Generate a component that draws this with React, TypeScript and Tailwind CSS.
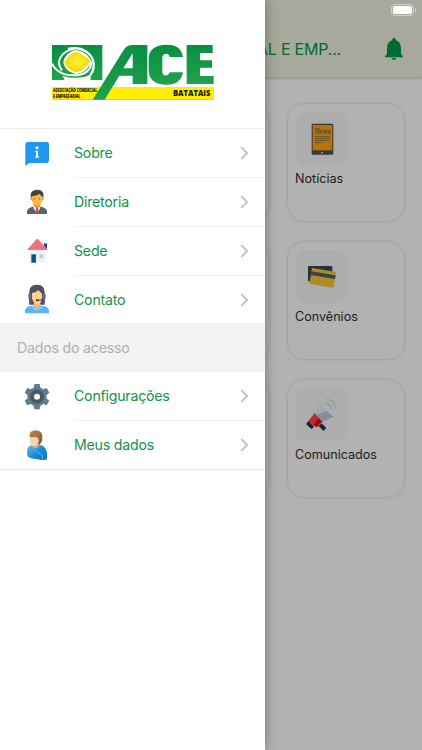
import React from "react";

type Children = { children: React.ReactNode };

function Logo() {
  return (
    <svg className="h-[75px] w-[185px]" viewBox="0 0 555 225">
      <defs>
        <linearGradient id="leaf" x1="0" y1="0" x2="0" y2="1">
          <stop offset="0" stopColor="#078f43" />
          <stop offset="1" stopColor="#21a14b" />
        </linearGradient>
        <radialGradient id="sun">
          <stop offset="0" stopColor="#ffef3c" />
          <stop offset="1" stopColor="#f2dc00" />
        </radialGradient>
      </defs>
      <rect x="36" y="156" width="486" height="38" fill="#ffee04" />
      <path d="M36 192H522V195H36Z" fill="#d9cf55" />
      <rect x="36" y="30" width="151" height="105" fill="url(#leaf)" />
      <path d="M68 122C84 130 132 132 153 118L151 136H74Z" fill="#fff" />
      <path d="M66 106C46 80 62 48 104 41" fill="none" stroke="#fff" strokeWidth="6" />
      <path d="M84 42C126 32 160 56 161 88C161 102 158 112 151 120" fill="none" stroke="#fff" strokeWidth="7" />
      <path d="M36 86C48 110 72 122 104 121C136 120 154 104 154 80" fill="none" stroke="#fff" strokeWidth="6" />
      <path d="M70 82C72 64 88 48 108 45C130 47 148 63 154 79C147 100 131 115 109 117C88 114 73 102 70 82Z" fill="#fff" />
      <path d="M73 82C80 69 93 55 106 51C122 54 143 67 150 79C142 94 126 110 109 112C93 109 78 98 73 82Z" fill="url(#sun)" />
      <path d="M158 194L251 45Q260 30 278 30H322V147H278V122H238L194 194Z" fill="url(#leaf)" />
      <path d="M250 100L278 55V100Z" fill="#fff" />
      <path d="M429 66H389C387 53 367 53 367 68V110C367 125 387 125 389 112H429C425 137 409 149 381 149C343 149 326 133 326 105V74C326 45 343 29 381 29C410 29 425 41 429 66Z" fill="url(#leaf)" />
      <path d="M440 30H518V54H480V76H516V98H480V123H521V147H440Z" fill="url(#leaf)" />
      <g fontFamily="'Open Sans', sans-serif" fontWeight="800" fill="#222209">
        <text x="39" y="171" fontSize="13.5" textLength="133" lengthAdjust="spacingAndGlyphs">ASSOCIAÇÃO COMERCIAL</text>
        <text x="39" y="189" fontSize="13.5" textLength="82" lengthAdjust="spacingAndGlyphs">E EMPRESARIAL</text>
        <text x="399" y="184" fontSize="25" textLength="112" lengthAdjust="spacingAndGlyphs">BATATAIS</text>
      </g>
    </svg>
  );
}

const menuIcon = "h-8 w-7 shrink-0";

function InfoIcon() {
  return (
    <svg className={menuIcon} viewBox="69 36 84 96">
      <path d="M84 51H139Q147 51 147 59V106Q147 114 139 114H87L76 124V59Q76 51 84 51Z" fill="#2196f3" />
      <circle cx="111" cy="68" r="4.5" fill="#fff" />
      <path d="M106 77H114V94H117V98H106V94H108V81H106Z" fill="#fff" />
    </svg>
  );
}

function ManagerIcon() {
  return (
    <svg className={menuIcon} viewBox="69 183 84 96">
      <path d="M81 267V259Q82 250 96 246L111 243L126 246Q140 250 141 259V267Z" fill="#546472" />
      <path d="M100 243H121L120 250L111 265L101 250Z" fill="#fff" />
      <path d="M101 236H121V243L111 251L101 243Z" fill="#f28c08" />
      <path d="M108 249H114L116 267H106Z" fill="#d34b4b" />
      <path d="M95 211Q110 202 127 211V224Q124 242 111 243Q98 242 95 224Z" fill="#ffb44d" />
      <circle cx="94" cy="222" r="4" fill="#ffa726" />
      <circle cx="128" cy="222" r="4" fill="#ffa726" />
      <path d="M93 220Q87 195 111 194Q136 194 129 220L126 214L118 207Q109 213 97 213Z" fill="#424242" />
      <circle cx="103" cy="222" r="1.8" fill="#68401f" />
      <circle cx="119" cy="222" r="1.8" fill="#68401f" />
    </svg>
  );
}

function HouseIcon() {
  return (
    <svg className={menuIcon} viewBox="69 30 84 96">
      <path d="M132 55H141V74H132Z" fill="#174a80" />
      <path d="M87 73H137V113H87Z" fill="#edf2f7" />
      <path d="M81 75L108 44Q112 40 116 44L144 75Z" fill="#ef727d" />
      <path d="M94 88H108V113H94Z" fill="#155083" />
      <path d="M118 88H130V100H118Z" fill="#bfd0df" />
    </svg>
  );
}

function SupportIcon() {
  return (
    <svg className={menuIcon} viewBox="69 175 84 96">
      <path d="M88 240Q85 199 91 189Q97 180 111 180Q126 180 131 190Q137 201 134 240Z" fill="#4d5162" />
      <path d="M75 266V259Q76 244 96 243H126Q147 244 147 259V266Z" fill="#5bb5f3" />
      <path d="M102 231H121V244L111 253L101 244Z" fill="#ffb968" />
      <path d="M97 243L111 255L125 243L129 247L111 260L93 247Z" fill="#8cceff" />
      <path d="M96 205Q109 203 115 196Q121 204 126 207V222Q124 237 111 238Q99 236 96 221Z" fill="#ffd08c" />
      <path d="M129 222Q125 227 114 227" fill="none" stroke="#414555" strokeWidth="3" />
      <rect x="85" y="207" width="9" height="17" rx="4" fill="#666b83" />
      <rect x="128" y="207" width="9" height="17" rx="4" fill="#666b83" />
      <ellipse cx="112" cy="227" rx="5" ry="3" fill="#34394c" />
    </svg>
  );
}

function GearIcon() {
  return (
    <svg className={menuIcon} viewBox="69 165 84 96">
      <g fill="#607d8b">
        <circle cx="111" cy="215" r="29" />
        <path id="tooth" d="M103 177H119L121 190H101Z" />
        <use href="#tooth" transform="rotate(60 111 215)" />
        <use href="#tooth" transform="rotate(120 111 215)" />
        <use href="#tooth" transform="rotate(180 111 215)" />
        <use href="#tooth" transform="rotate(240 111 215)" />
        <use href="#tooth" transform="rotate(300 111 215)" />
      </g>
      <circle cx="111" cy="215" r="15" fill="#fff" stroke="#455a64" strokeWidth="12" />
    </svg>
  );
}

function UserIcon() {
  return (
    <svg className={menuIcon} viewBox="69 312 84 96">
      <defs>
        <linearGradient id="shirt" x1="0" y1="0" x2="1" y2="1">
          <stop offset="0" stopColor="#68baf0" />
          <stop offset=".55" stopColor="#178bdb" />
          <stop offset="1" stopColor="#1272b9" />
        </linearGradient>
        <linearGradient id="hair" x1="0" y1="0" x2="1" y2="1">
          <stop offset="0" stopColor="#c18e55" />
          <stop offset="1" stopColor="#845025" />
        </linearGradient>
      </defs>
      <path d="M82 373Q84 363 96 361L117 359Q134 361 139 376Q144 393 139 404Q123 407 111 402Q92 403 83 394Q79 385 82 373Z" fill="url(#shirt)" />
      <path d="M94 356H117L116 366Q105 374 96 364Z" fill="#e5a276" />
      <path d="M91 334Q104 326 119 338V352Q113 366 101 364Q89 359 89 347Z" fill="#f8d1b7" />
      <path d="M89 335Q86 321 98 317Q116 312 124 323Q129 331 126 348L119 359L114 357L117 345L110 335Q96 339 89 335Z" fill="url(#hair)" />
      <path d="M98 369Q111 385 126 390M126 390L128 403" fill="none" stroke="#75c1ef" strokeWidth="2" />
    </svg>
  );
}

function Chevron() {
  return (
    <svg className="mr-4 ml-auto h-[14px] w-[9px]" viewBox="0 0 9 14" fill="none" stroke="#c6c6c8" strokeWidth="2">
      <path d="M1.2 1L7.2 7L1.2 13" />
    </svg>
  );
}

function MenuRow({ icon, label, edge }: { icon: React.ReactNode; label: string; edge?: "last" | "short" }) {
  return (
    <li className={`flex pl-[23px] ${edge === "short" ? "h-[47px]" : "h-[49px]"} ${edge === "last" ? "border-b border-[#ebebed]" : ""}`}>
      <div className="flex w-[51px] items-center pb-px">{icon}</div>
      <div className={`flex flex-1 items-center text-[14.2px] leading-[22px] tracking-[-0.24px] text-[#14934a] ${edge ? "" : "border-b border-[#f0f0f1]"}`}>
        <span>{label}</span>
        <Chevron />
      </div>
    </li>
  );
}

function SideMenu() {
  return (
    <aside className="absolute inset-y-0 left-0 w-[265px] bg-white shadow-[0_0_12px_rgba(0,0,0,0.35)]">
      <div className="h-[129px] border-b border-[#ebebed] pt-[35px] pl-10">
        <Logo />
      </div>
      <ul>
        <MenuRow icon={<InfoIcon />} label="Sobre" />
        <MenuRow icon={<ManagerIcon />} label="Diretoria" />
        <MenuRow icon={<HouseIcon />} label="Sede" />
        <MenuRow icon={<SupportIcon />} label="Contato" edge="short" />
      </ul>
      <h2 className="flex h-[49px] items-center bg-[#f3f3f3] pl-[17px] text-[14.2px] leading-[22px] tracking-[-0.22px] text-[#b0b0b0]">Dados do acesso</h2>
      <ul>
        <MenuRow icon={<GearIcon />} label="Configurações" />
        <MenuRow icon={<UserIcon />} label="Meus dados" edge="last" />
      </ul>
    </aside>
  );
}

function TabletNews() {
  return (
    <svg className="h-[53px] w-[53px]" viewBox="120 50 159 159">
      <rect x="170" y="85" width="65" height="93" rx="4" fill="#343a3c" />
      <path d="M173 89H232V165H173Z" fill="#b87409" />
      <text x="179" y="115" fontFamily="'Liberation Serif', serif" fontWeight="700" fontSize="22" textLength="47" lengthAdjust="spacingAndGlyphs" fill="#66543c" stroke="#66543c" strokeWidth="1">News</text>
      <path d="M179 124H224M179 130H224M179 136H224M179 142H199" stroke="#66543c" strokeWidth="3" />
      <circle cx="201" cy="172" r="2.7" fill="#aaa" />
    </svg>
  );
}

function BankCards() {
  return (
    <svg className="h-[53px] w-[53px]" viewBox="120 44 159 159">
      <path d="M161 92H229Q232 92 232 95V138H159V95Q159 92 161 92Z" fill="#25323a" />
      <path d="M171 98L240 109Q244 110 243 114L236 154Q235 158 231 157L167 146Q163 145 164 141Z" fill="#b38b24" />
      <path d="M169 108L242 120L240 131L167 119Z" fill="#374349" />
    </svg>
  );
}

function Megaphone() {
  return (
    <svg className="h-[53px] w-[53px]" viewBox="120 54 159 159">
      <path d="M189 92L214 122L181 137Z" fill="#a0a7b5" />
      <path d="M214 122L237 140L201 156L181 137Z" fill="#858d9f" />
      <path d="M160 153L179 129L190 143L173 164Z" fill="#bd2c2c" />
      <path d="M190 143L202 155L185 172L173 164Z" fill="#a30b0b" />
      <path d="M155 158L161 153L177 170L170 178L155 164Z" fill="#17243e" />
      <path d="M190 168L200 160L214 174L206 183Z" fill="#18263f" />
      <path d="M211 100Q226 101 229 118M214 88Q238 87 244 118" fill="none" stroke="#9298a7" strokeWidth="4" />
    </svg>
  );
}

function CardShell({ children }: { children?: React.ReactNode }) {
  return (
    <div className="h-[119px] rounded-[18px] border border-[#a5a5a5] pt-[8px] pl-[7px] shadow-[0_0_3px_rgba(0,0,0,0.08)]">
      {children}
    </div>
  );
}

function Tile({ label, children }: { label: string } & Children) {
  return (
    <CardShell>
      <div className="h-[53px] w-[53px] rounded-[11px] bg-[#adadad]">{children}</div>
      <p className="mt-1 text-[12.6px] leading-5 text-[#1c1c1c]">{label}</p>
    </CardShell>
  );
}

function Battery() {
  return (
    <div className="flex items-center gap-px">
      <div className="h-[12px] w-[23px] rounded-[4px] border border-[#cfd0c8] p-px">
        <div className="h-full rounded-[2px] bg-white" />
      </div>
      <div className="h-1 w-px rounded-r bg-[#cfd0c8]" />
    </div>
  );
}

function Bell() {
  return (
    <svg className="h-[22px] w-[20px]" viewBox="402 115 60 66" fill="#006b30">
      <path d="M432 115Q437 115 438 122Q452 126 453 146V162L459 170V173H405V170L411 162V146Q412 126 426 122Q427 115 432 115Z" />
      <path d="M425 175H439Q437 181 432 181Q427 181 425 175Z" />
    </svg>
  );
}

export default function App() {
  return (
    <div className="relative h-[750px] w-[422px] overflow-hidden bg-[#b2b2b2] font-['Inter',sans-serif]">
      <header className="h-[78px] border-b border-[#999a93] bg-[#a8a99d] shadow-[0_1px_2px_rgba(0,0,0,0.15)]">
        <div className="flex h-5 items-center justify-end pr-[6px]">
          <Battery />
        </div>
        <div className="flex h-[58px] items-center justify-between pr-[18px]">
          <h1 className="w-[341px] text-right text-[16px] tracking-[-0.2px] whitespace-nowrap text-[#006b30]">ASSOCIAÇÃO COMERCIAL E EMP...</h1>
          <Bell />
        </div>
      </header>
      <main className="ml-auto grid w-[270px] grid-cols-2 gap-x-[17px] gap-y-[19px] pt-[25px] pr-[17px]">
        <CardShell />
        <Tile label="Notícias"><TabletNews /></Tile>
        <CardShell />
        <Tile label="Convênios"><BankCards /></Tile>
        <CardShell />
        <Tile label="Comunicados"><Megaphone /></Tile>
      </main>
      <SideMenu />
    </div>
  );
}
